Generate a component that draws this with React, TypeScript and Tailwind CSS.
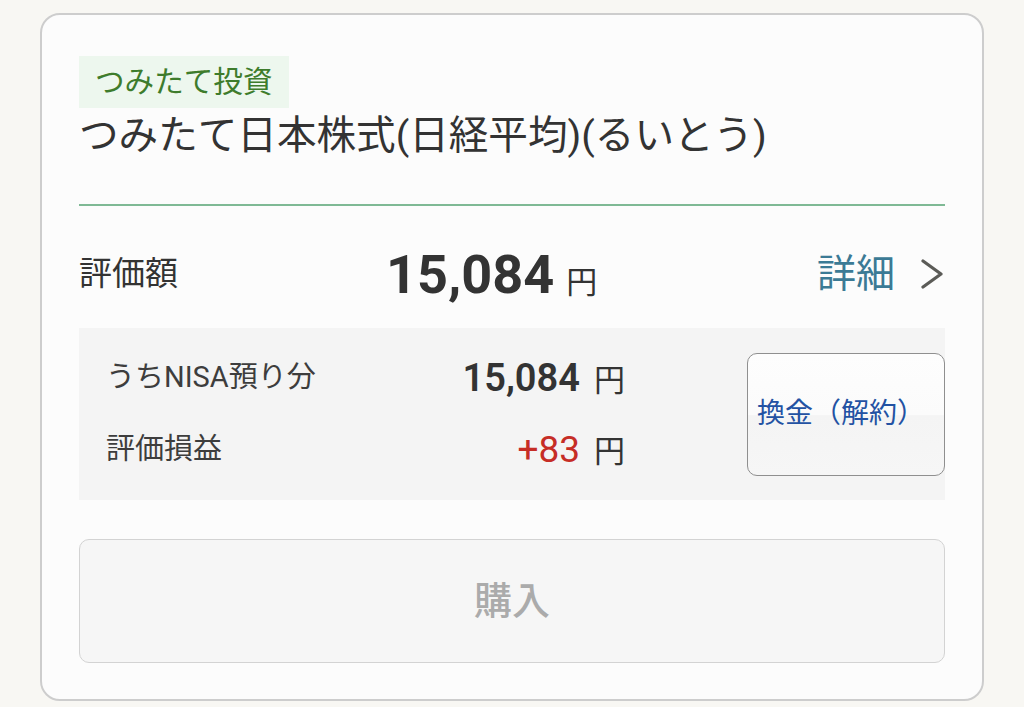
import React from "react";

const font = { fontFamily: '"Roboto", "Noto Sans CJK JP", sans-serif' };

function Chevron() {
    return (
        <svg width="26" height="30" viewBox="0 0 26 30" className="ml-[24px]">
            <polyline
                points="4,2 22,15 4,28"
                fill="none"
                stroke="#5b5b57"
                strokeWidth="3.2"
                strokeLinecap="round"
                strokeLinejoin="round"
            />
        </svg>
    );
}

function AmountRow({ label, value, red }: { label: string; value: string; red?: boolean }) {
    return (
        <div className="flex h-[72px] items-center">
            <span className="w-[280px] text-[29px] text-[#3d3d3d]">{label}</span>
            <div className="flex w-[239px] items-baseline justify-end">
                <span
                    className={
                        red
                            ? "text-[37px] text-[#c62d26]"
                            : "text-[38px] font-semibold text-[#333]"
                    }
                >
                    {value}
                </span>
                <span className="ml-[14px] text-[31px] text-[#333]">円</span>
            </div>
        </div>
    );
}

export default function App() {
    return (
        <div className="h-[707px] w-[1024px] bg-[#f8f7f3] pl-[40px] pt-[13px]" style={font}>
            <div className="w-[944px] rounded-[20px] border-2 border-[#cdcdcd] bg-[#fcfcfc] pb-[36px] pl-[37px] pr-[37px] pt-[41px]">
                {/* badge + fund name */}
                <div className="inline-flex h-[52px] items-center bg-[#edf7ee] px-[16px] text-[29.6px] text-[#3e7c2c]">
                    つみたて投資
                </div>
                <h1 className="text-[39.6px] font-normal leading-[56px] text-[#333]">
                    つみたて日本株式(日経平均)(るいとう)
                </h1>
                <div className="mt-[40px] h-[2px] bg-[#7fb995]" />

                {/* valuation */}
                <div className="flex h-[122px] items-center pt-[14px]">
                    <span className="w-[307px] text-[33px] text-[#333]">評価額</span>
                    <div className="flex items-baseline">
                        <span className="text-[54px] font-bold text-[#333]">15,084</span>
                        <span className="ml-[12px] text-[31px] text-[#333]">円</span>
                    </div>
                    <div className="ml-auto flex items-center">
                        <span className="text-[39px] text-[#3b7a95]">詳細</span>
                        <Chevron />
                    </div>
                </div>

                {/* breakdown */}
                <div className="flex items-center bg-[#f4f4f4] py-[14px] pl-[27px]">
                    <div className="flex flex-col">
                        <AmountRow label="うちNISA預り分" value="15,084" />
                        <AmountRow label="評価損益" value="+83" red />
                    </div>
                    <button className="ml-auto flex h-[123px] w-[198px] items-center rounded-[10px] border-[1.5px] border-[#8f8f8f] bg-[linear-gradient(#fdfdfd_0%,#fbfbfb_50%,#f4f4f4_51%,#f6f6f6_100%)] pl-[9px] text-[28px] text-[#2352a3]">
                        換金（解約）
                    </button>
                </div>

                <button className="mt-[39px] flex h-[124px] w-full items-center justify-center rounded-[10px] border-[1.5px] border-[#d3d3d3] bg-[#f6f6f6] text-[38px] font-medium text-[#ababab]">
                    購入
                </button>
            </div>
        </div>
    );
}
